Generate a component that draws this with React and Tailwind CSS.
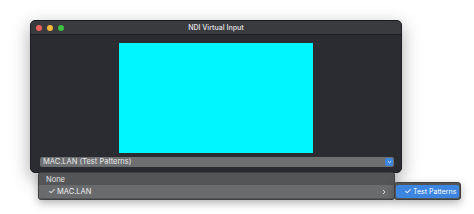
import React from 'react';

const font = { fontFamily: 'Inter, "Noto Sans", sans-serif' };

function TrafficLights() {
    return (
        <div className="flex items-center gap-[5px] absolute left-[5px] top-[4px]">
            <span className="w-[6px] h-[6px] rounded-full bg-[#ee5f57]" />
            <span className="w-[6px] h-[6px] rounded-full bg-[#f3b73b]" />
            <span className="w-[6px] h-[6px] rounded-full bg-[#3bc143]" />
        </div>
    );
}

export default function App() {
    return (
        <div className="w-[474px] h-[214px] bg-white relative overflow-hidden" style={font}>
            {/* Window */}
            <div className="absolute left-[30px] top-[20px] w-[372px] h-[153px] rounded-[5px] bg-[#2a2c31] shadow-[0_6px_18px_rgba(0,0,0,0.35)] flex flex-col overflow-hidden border border-[#1c1d20]">
                <div className="relative h-[14px] bg-[#3a3b3f] border-b border-[#1e1f22] flex items-center justify-center">
                    <TrafficLights />
                    <span className="text-[7px] font-semibold text-[#d7d7d9] leading-none">NDI Virtual Input</span>
                </div>
                <div className="flex-1 flex flex-col items-center pt-[8px]">
                    <div className="w-[194px] h-[110px] bg-[#00f6ff]" />
                    <div className="mt-[4px] ml-[9px] self-start w-[354px] h-[10px] rounded-[2px] bg-[#6e6f71] flex items-center justify-between pl-[3px] pr-[1px]">
                        <span className="text-[7.5px] text-[#e9e9ea] leading-none">MAC.LAN (Test Patterns)</span>
                        <span className="w-[8px] h-[8px] rounded-[2px] bg-[#3b84e0] flex items-center justify-center">
                            <svg width="5" height="4" viewBox="0 0 5 4"><path d="M0.8 1.2 L2.5 2.8 L4.2 1.2" stroke="white" strokeWidth="0.9" fill="none" /></svg>
                        </span>
                    </div>
                </div>
            </div>

            {/* Dropdown menu */}
            <div className="absolute left-[38px] top-[172px] w-[357px] h-[28px] rounded-[3px] bg-[#545557] shadow-[0_3px_8px_rgba(0,0,0,0.3)] border border-[#3e3f41] flex flex-col pt-[1px]">
                <div className="h-[11px] flex items-center pl-[7px]">
                    <span className="text-[7.5px] text-[#e6e6e7] leading-none">None</span>
                </div>
                <div className="h-[13px] bg-[#6a6b6d] flex items-center pl-[9px] pr-[8px]">
                    <span className="text-[8.5px] text-[#eeeeef] leading-none w-[9px]">✓</span>
                    <span className="text-[7.5px] text-[#eeeeef] leading-none flex-1">MAC.LAN</span>
                    <svg width="4" height="6" viewBox="0 0 4 6"><path d="M1 1 L3 3 L1 5" stroke="#e6e6e7" strokeWidth="0.9" fill="none" /></svg>
                </div>
            </div>

            {/* Submenu */}
            <div className="absolute left-[394px] top-[182px] w-[67px] h-[18px] rounded-[3px] bg-[#545557] border border-[#3e3f41] shadow-[0_3px_8px_rgba(0,0,0,0.3)] flex items-center px-[1px]">
                <div className="w-full h-[13px] rounded-[2px] bg-[#3c85e0] flex items-center pl-[8px] whitespace-nowrap">
                    <span className="text-[8.5px] text-white leading-none w-[9px]">✓</span>
                    <span className="text-[7px] text-white leading-none">Test Patterns</span>
                </div>
            </div>
        </div>
    );
}
